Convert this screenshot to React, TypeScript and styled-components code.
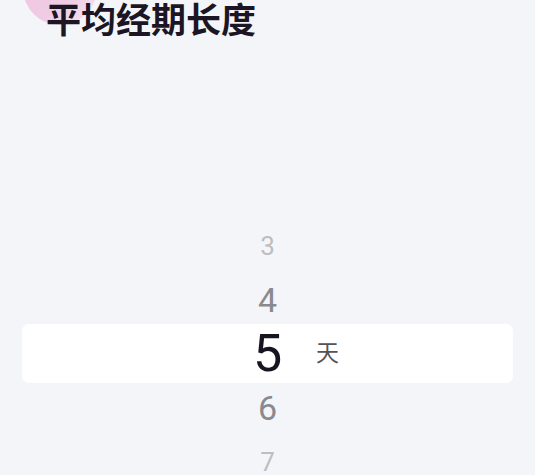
import styled, { createGlobalStyle } from 'styled-components';

const GlobalStyle = createGlobalStyle`
   html, body {
      margin: 0;
      padding: 0;
      background: #f4f5f9;
      overflow: hidden;
   }
   body {
      font-family: Roboto, 'Noto Sans CJK SC', sans-serif;
   }
`;

const Page = styled.div`
   position: relative;
   width: 535px;
   height: 475px;
   overflow: hidden;
   background: #f4f5f9;
`;

const Blob = styled.div`
   position: absolute;
   left: 23px;
   top: -49px;
   width: 74px;
   height: 74px;
   border-radius: 50%;
   background: linear-gradient(135deg, #f3c4df 0%, #efcbe4 60%, #f4e6f1 100%);
`;

const Title = styled.h1`
   position: relative;
   margin: 0;
   padding: 0 0 0 46px;
   font-family: 'Noto Sans CJK SC', sans-serif;
   font-weight: 700;
   font-size: 35px;
   line-height: 38px;
   margin-top: -1px;
   color: #1c1524;
`;

const Picker = styled.div`
   display: flex;
   flex-direction: column;
   margin-top: 182px;
`;

const Row = styled.div<{ $selected?: boolean }>`
   position: relative;
   display: grid;
   grid-template-columns: 1fr auto 1fr;
   align-items: center;
   height: 54px;
   margin: 0 22px;

   ${({ $selected }) =>
      $selected &&
      `
      &::before {
         content: '';
         position: absolute;
         left: 0;
         right: 0;
         top: -3px;
         bottom: -2px;
         background: #ffffff;
         border-radius: 7px;
      }
   `}
`;

const Num = styled.span<{ $size: number; $color: string }>`
   position: relative;
   grid-column: 2;
   font-family: Roboto, sans-serif;
   font-size: ${({ $size }) => $size}px;
   line-height: 1;
   color: ${({ $color }) => $color};
`;

const Unit = styled.span`
   position: relative;
   grid-column: 3;
   padding-left: 34px;
   padding-bottom: 5px;
   font-family: 'Noto Sans CJK SC', sans-serif;
   font-size: 23px;
   line-height: 1;
   color: #55525a;
`;

const rows = [
   { value: 3, size: 26, color: '#bdbdc2' },
   { value: 4, size: 34, color: '#8a898f' },
   { value: 5, size: 52, color: '#191520' },
   { value: 6, size: 34, color: '#8a898f' },
   { value: 7, size: 26, color: '#bdbdc2' },
];

const App = () => {
   return (
      <Page>
         <GlobalStyle />
         <Blob />
         <Title>平均经期长度</Title>
         <Picker>
            {rows.map((r) => (
               <Row key={r.value} $selected={r.value === 5}>
                  <Num $size={r.size} $color={r.color}>
                     {r.value}
                  </Num>
                  {r.value === 5 && <Unit>天</Unit>}
               </Row>
            ))}
         </Picker>
      </Page>
   );
};

export default App;
